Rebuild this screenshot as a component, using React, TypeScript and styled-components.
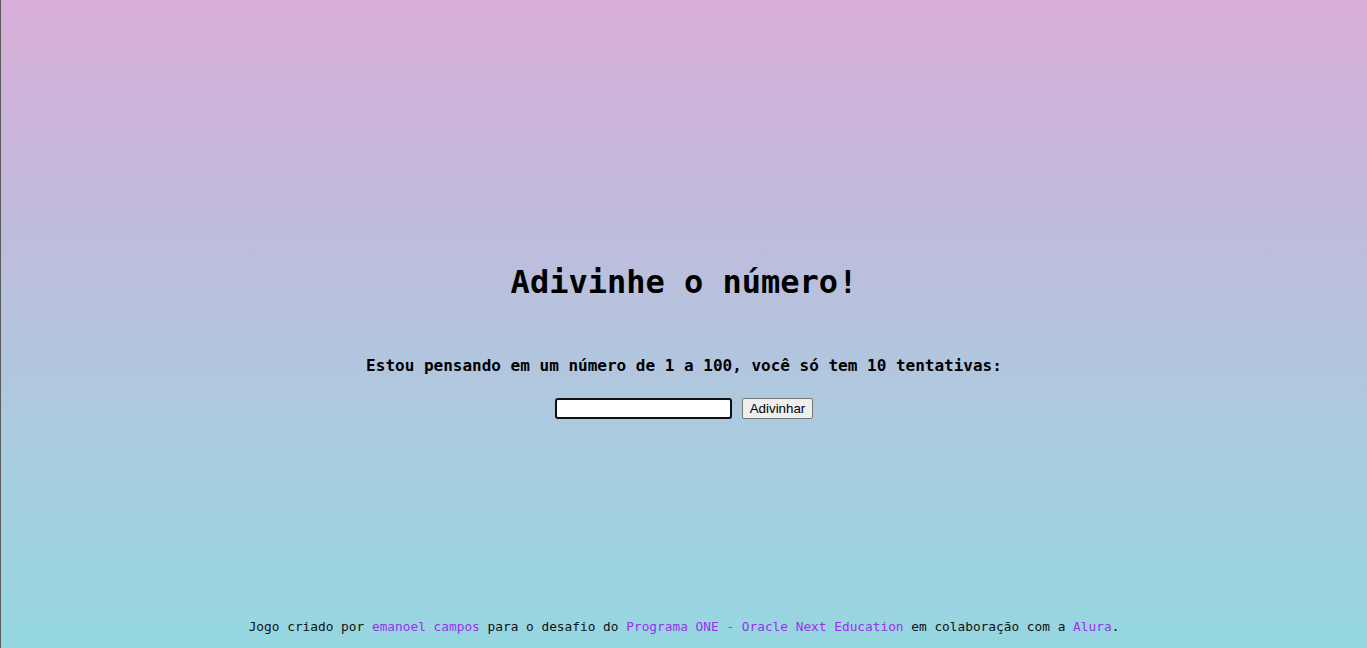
import React from "react";
import styled, { createGlobalStyle } from "styled-components";

const Global = createGlobalStyle`
  html, body { margin: 0; padding: 0; }
  body {
    font-family: "DejaVu Sans Mono", "Liberation Mono", monospace;
    color: #000;
  }
`;

const Page = styled.div`
  box-sizing: border-box;
  height: 648px;
  border-left: 1px solid #5a5a5a;
  background: linear-gradient(to bottom, #d9aed9 0%, #bcbedc 40%, #a9cde0 70%, #95d7e0 100%);
  display: flex;
  flex-direction: column;
`;

const Main = styled.main`
  flex: 1;
  display: flex;
  flex-direction: column;
  align-items: center;
  padding-top: 262px;
`;

const Title = styled.h1`
  margin: 0;
  font-size: 32px;
  line-height: 40px;
  font-weight: 700;
`;

const Subtitle = styled.p`
  margin: 54px 0 0;
  font-size: 16px;
  line-height: 20px;
  font-weight: 700;
`;

const Form = styled.form`
  margin-top: 22px;
  display: flex;
  align-items: center;
  gap: 10px;
`;

const Input = styled.input`
  box-sizing: border-box;
  width: 177px;
  height: 21px;
  border: 2px solid #101010;
  border-radius: 3px;
  background: #fff;
  padding: 1px 2px;
  outline: none;
  font: 13.33px "Liberation Sans", Arial, sans-serif;
`;

const Button = styled.button`
  box-sizing: border-box;
  height: 21px;
  padding: 1px 7px;
  border: 1px solid #767676;
  border-radius: 2px;
  background: #efefef;
  color: #000;
  font: 13.33px "Liberation Sans", Arial, sans-serif;
`;

const Footer = styled.footer`
  text-align: center;
  font-size: 12.8px;
  line-height: 16px;
  padding-bottom: 13px;
  color: #111;
`;

const Link = styled.a`
  color: #9b30ef;
  text-decoration: none;
`;

export default function App() {
  return (
    <>
      <Global />
      <Page>
        <Main>
          <Title>Adivinhe o número!</Title>
          <Subtitle>Estou pensando em um número de 1 a 100, você só tem 10 tentativas:</Subtitle>
          <Form onSubmit={(e) => e.preventDefault()}>
            <Input type="text" />
            <Button type="submit">Adivinhar</Button>
          </Form>
        </Main>
        <Footer>
          Jogo criado por <Link href="#">emanoel campos</Link> para o desafio do{" "}
          <Link href="#">Programa ONE - Oracle Next Education</Link> em colaboração com a{" "}
          <Link href="#">Alura</Link>.
        </Footer>
      </Page>
    </>
  );
}
